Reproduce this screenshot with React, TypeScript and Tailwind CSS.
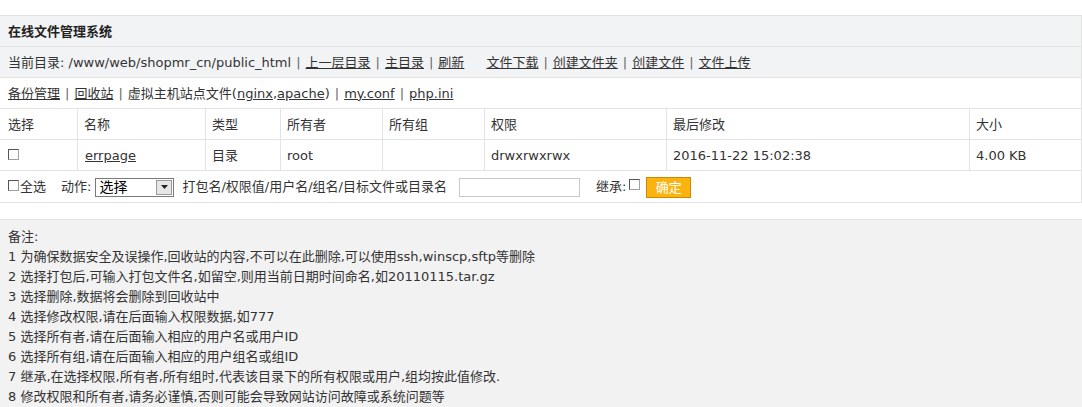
import React from 'react'

const font = { fontFamily: '"DejaVu Sans", "Noto Sans CJK SC", sans-serif' }

function Box() {
  return (
    <span className="inline-block w-[11px] h-[11px] border border-[#a0a0a0] border-t-[#555] border-l-[#555] bg-white align-middle" />
  )
}

function Sep() {
  return <span className="mx-[5px] text-[#666]">|</span>
}

const cols = [
  { w: 'w-[77px]', label: '选择' },
  { w: 'w-[128px]', label: '名称' },
  { w: 'w-[75px]', label: '类型' },
  { w: 'w-[102px]', label: '所有者' },
  { w: 'w-[102px]', label: '所有组' },
  { w: 'w-[182px]', label: '权限' },
  { w: 'w-[303px]', label: '最后修改' },
  { w: 'flex-1', label: '大小' },
]

const notes = [
  '1 为确保数据安全及误操作,回收站的内容,不可以在此删除,可以使用ssh,winscp,sftp等删除',
  '2 选择打包后,可输入打包文件名,如留空,则用当前日期时间命名,如20110115.tar.gz',
  '3 选择删除,数据将会删除到回收站中',
  '4 选择修改权限,请在后面输入权限数据,如777',
  '5 选择所有者,请在后面输入相应的用户名或用户ID',
  '6 选择所有组,请在后面输入相应的用户组名或组ID',
  '7 继承,在选择权限,所有者,所有组时,代表该目录下的所有权限或用户,组均按此值修改.',
  '8 修改权限和所有者,请务必谨慎,否则可能会导致网站访问故障或系统问题等',
]

export default function App() {
  const row = ['', 'errpage', '目录', 'root', '', 'drwxrwxrwx', '2016-11-22 15:02:38', '4.00 KB']

  return (
    <div className="w-[1082px] h-[407px] bg-white text-[13px] text-[#333] overflow-hidden" style={font}>
      <div className="h-[15px]" />

      <div className="border-t border-r border-[#e3e3e3]">
        <div className="h-[31px] flex items-center px-[8px] pt-[1px] bg-[#f2f3f5] border-b border-[#e3e3e3] font-bold text-[#222]">
          在线文件管理系统
        </div>

        <div className="h-[31px] flex items-center px-[8px] pt-[1px] bg-[#f2f3f5] border-b border-[#e3e3e3] whitespace-nowrap">
          <span>当前目录: /www/web/shopmr_cn/public_html</span>
          <Sep />
          <a className="underline">上一层目录</a>
          <Sep />
          <a className="underline">主目录</a>
          <Sep />
          <a className="underline">刷新</a>
          <span className="w-[22px]" />
          <a className="underline">文件下载</a>
          <Sep />
          <a className="underline">创建文件夹</a>
          <Sep />
          <a className="underline">创建文件</a>
          <Sep />
          <a className="underline">文件上传</a>
        </div>

        <div className="h-[31px] flex items-center px-[8px] pt-[1px] border-b border-[#e3e3e3] whitespace-nowrap">
          <a className="underline">备份管理</a>
          <Sep />
          <a className="underline">回收站</a>
          <Sep />
          <span>
            虚拟主机站点文件(<a className="underline">nginx</a>,<a className="underline">apache</a>)
          </span>
          <Sep />
          <a className="underline">my.conf</a>
          <Sep />
          <a className="underline">php.ini</a>
        </div>

        <div className="h-[31px] flex border-b border-[#e3e3e3]">
          {cols.map((c, i) => (
            <div
              key={c.label}
              className={`${c.w} flex items-center px-[6px] pt-[1px] ${i > 0 ? 'border-l border-[#e3e3e3]' : 'pl-[8px]'}`}
            >
              {c.label}
            </div>
          ))}
        </div>

        <div className="h-[31px] flex border-b border-[#e3e3e3]">
          {cols.map((c, i) => (
            <div
              key={c.label}
              className={`${c.w} flex items-center px-[6px] pt-[1px] ${i > 0 ? 'border-l border-[#e3e3e3]' : 'pl-[8px]'}`}
            >
              {i === 0 ? (
                <span className="-mt-[4px]">
                  <Box />
                </span>
              ) : i === 1 ? (
                <a className="underline ml-[1px]">{row[i]}</a>
              ) : (
                row[i]
              )}
            </div>
          ))}
        </div>

        <div className="h-[32px] flex items-center px-[8px] pt-[1px] border-b border-[#e3e3e3] whitespace-nowrap">
          <span className="-mt-[4px]">
            <Box />
          </span>
          <span className="ml-[1px]">全选</span>
          <span className="ml-[15px]">动作:</span>
          <div className="ml-[4px] w-[79px] h-[19px] border border-[#7a7a7a] bg-white flex items-center justify-between">
            <span className="pl-[3px] text-[14px] text-black">选择</span>
            <span className="w-[16px] h-[15px] mr-[1px] bg-[#e6e6e6] border border-[#999] flex items-center justify-center">
              <svg width="7" height="4" viewBox="0 0 7 4">
                <path d="M0 0 L7 0 L3.5 4 Z" fill="#222" />
              </svg>
            </span>
          </div>
          <span className="ml-[8px]">打包名/权限值/用户名/组名/目标文件或目录名</span>
          <div className="ml-[12px] w-[121px] h-[19px] border border-[#c8c8c8] bg-white" />
          <span className="ml-[16px]">继承:</span>
          <span className="ml-[3px] -mt-[6px]">
            <Box />
          </span>
          <button className="ml-[6px] w-[45px] h-[21px] bg-[#fbb40f] border border-[#c98a00] text-white text-[13px]">
            确定
          </button>
        </div>
      </div>

      <div className="h-[16px]" />

      <div className="bg-[#f2f2f2] border-t border-[#e3e3e3] px-[8px] pt-[7px] leading-[20px]">
        <div>备注:</div>
        {notes.map(n => (
          <div key={n}>{n}</div>
        ))}
      </div>
    </div>
  )
}
